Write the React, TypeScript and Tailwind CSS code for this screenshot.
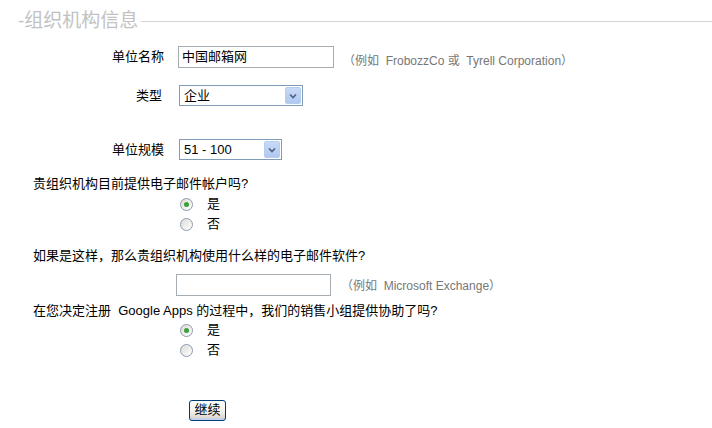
import { useState } from 'react';

const FONT = "font-['Liberation_Sans','Noto_Sans_CJK_SC',sans-serif]";

const Radio = ({ checked, label, onClick }: { checked: boolean; label: string; onClick: () => void }) => (
  <div className="flex items-center h-[20px] pl-[180px] cursor-pointer" onClick={onClick}>
    <span className="w-[13px] h-[13px] rounded-full border border-[#8b9bb0] bg-gradient-to-br from-[#dcdcd6] to-white flex items-center justify-center">
      {checked && <span className="w-[5px] h-[5px] rounded-full bg-[#3aa13a]" />}
    </span>
    <span className="ml-[14px] text-[13px] leading-[16px]">{label}</span>
  </div>
);

const FakeSelect = ({ value, width }: { value: string; width: string }) => (
  <div className={`${width} h-[21px] border border-[#7f9db9] bg-white flex items-center justify-between pl-[4px] pr-[1px]`}>
    <span className="text-[13px] leading-[16px]">{value}</span>
    <span className="w-[16px] h-[17px] rounded-[2px] bg-gradient-to-b from-[#c9d9f8] to-[#b0c8f0] border border-[#b8ccee] flex items-center justify-center">
      <svg width="8" height="6" viewBox="0 0 8 6">
        <path d="M1 1.5 L4 4.5 L7 1.5" fill="none" stroke="#4d6185" strokeWidth="1.6" />
      </svg>
    </span>
  </div>
);

export default function App() {
  const [hasMail, setHasMail] = useState(true);
  const [helped, setHelped] = useState(true);

  return (
    <div className={`w-[712px] h-[428px] bg-white text-black ${FONT}`}>
      {/* Legend */}
      <div className="flex items-center pt-[10px]">
        <span className="pl-[18px] pr-[3px] text-[19px] leading-[22px] text-[#c2c2c2]">-组织机构信息</span>
        <span className="flex-1 h-px bg-[#d4d4d4]" />
      </div>

      {/* Org name */}
      <div className="flex items-center mt-[14px] h-[22px]">
        <span className="w-[164px] text-right text-[13px] leading-[16px]">单位名称</span>
        <div className="ml-[14px] w-[156px] h-[22px] border border-[#a5acb2] flex items-center px-[3px] text-[13px]">
          中国邮箱网
        </div>
        <span className="ml-[9px] self-end translate-y-[1px] text-[12px] leading-[16px] text-[#777]">（例如&nbsp; FrobozzCo 或&nbsp; Tyrell Corporation）</span>
      </div>

      {/* Type */}
      <div className="flex items-center mt-[17px]">
        <span className="w-[162px] text-right text-[13px] leading-[16px]">类型</span>
        <div className="ml-[17px]">
          <FakeSelect value="企业" width="w-[124px]" />
        </div>
      </div>

      {/* Size */}
      <div className="flex items-center mt-[33px]">
        <span className="w-[164px] text-right text-[13px] leading-[16px]">单位规模</span>
        <div className="ml-[15px]">
          <FakeSelect value="51 - 100" width="w-[103px]" />
        </div>
      </div>

      {/* Q1 */}
      <p className="mt-[16px] pl-[33px] text-[13px] leading-[16px]">贵组织机构目前提供电子邮件帐户吗?</p>
      <div className="mt-[2px]">
        <Radio checked={hasMail} label="是" onClick={() => setHasMail(true)} />
        <Radio checked={!hasMail} label="否" onClick={() => setHasMail(false)} />
      </div>

      {/* Q2 */}
      <p className="mt-[14px] pl-[33px] text-[13px] leading-[16px]">如果是这样，那么贵组织机构使用什么样的电子邮件软件?</p>
      <div className="flex items-center mt-[10px] pl-[176px]">
        <div className="w-[155px] h-[22px] border border-[#a5acb2]" />
        <span className="ml-[10px] mt-[2px] text-[12px] text-[#777]">（例如&nbsp; Microsoft Exchange）</span>
      </div>

      {/* Q3 */}
      <p className="mt-[7px] pl-[33px] text-[13px] leading-[16px]">在您决定注册&nbsp; Google Apps 的过程中，我们的销售小组提供协助了吗?</p>
      <div className="mt-[1px]">
        <Radio checked={helped} label="是" onClick={() => setHelped(true)} />
        <Radio checked={!helped} label="否" onClick={() => setHelped(false)} />
      </div>

      {/* Continue */}
      <div className="mt-[37px] pl-[189px]">
        <button className="w-[37px] h-[21px] rounded-[3px] border border-[#003c74] bg-gradient-to-b from-white via-[#f4f4f0] to-[#d6d0c5] shadow-[inset_0_-2px_0_#c5d2ee] text-[13px] leading-[16px]">
          继续
        </button>
      </div>
    </div>
  );
}
